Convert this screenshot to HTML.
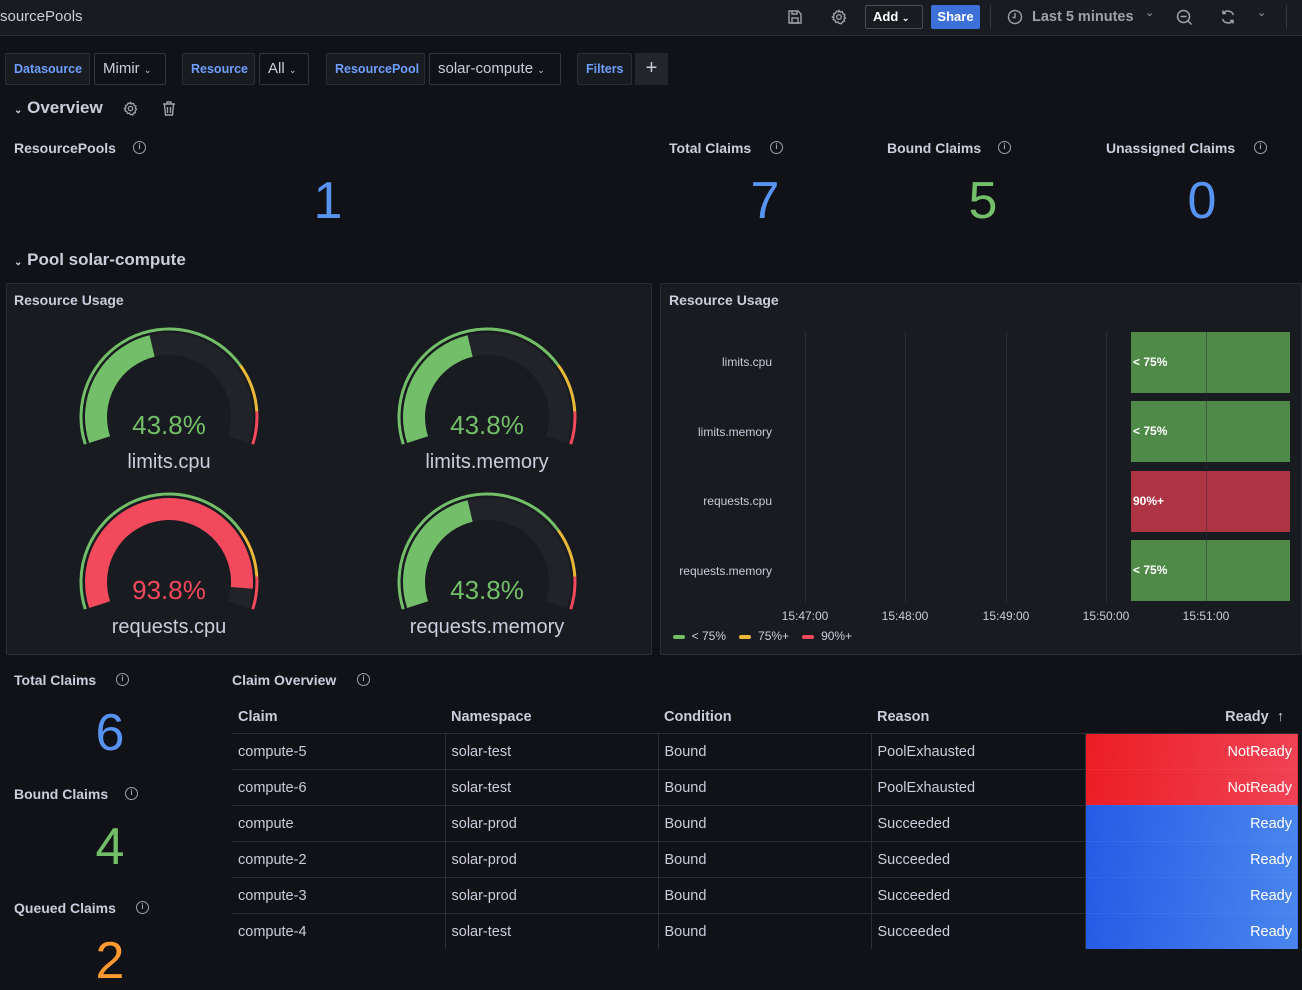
<!DOCTYPE html>
<html><head><meta charset="utf-8">
<style>
*{box-sizing:border-box;margin:0;padding:0}
body{width:1302px;height:981px;overflow:hidden;background:#111217;font-family:"Liberation Sans",sans-serif;color:#ccccdc;position:relative}
.a{position:absolute;white-space:nowrap}
.top{position:absolute;left:0;top:0;width:1302px;height:36px;background:#181b1f;border-bottom:1px solid #2c2e33}
.lbl{position:absolute;height:32px;border:1px solid #2c2e33;background:#181b1f;color:#6e9fff;font-size:12.5px;font-weight:bold;line-height:30px;padding:0 8px;border-radius:2px}
.sel{position:absolute;height:32px;border:1px solid #34363c;background:#111217;color:#ccccdc;font-size:15px;line-height:30px;padding:0 8px;border-radius:2px}
.t{font-size:14px;font-weight:bold;color:#ccccdc}
.big{font-size:52px;line-height:52px;color:#5794f2;text-align:center;width:100px}
.info{display:inline-block;width:13px;height:13px;border:1.4px solid #9fa1a8;border-radius:50%;position:absolute;font-size:8px;line-height:10px;text-align:center;color:#9fa1a8;font-weight:bold}
.panel{position:absolute;background:#181b1f;border:1px solid #2c2e33;border-radius:2px}
.gv{position:absolute;width:180px;text-align:center;font-size:26px;color:#73bf69}
.gl{position:absolute;width:200px;text-align:center;font-size:20px;color:#ccccdc}
.rl{position:absolute;right:529px;font-size:12px;color:#ccccdc;text-align:right}
.bar{position:absolute;left:470px;width:159px;height:61px;background:#508a48;color:#fff;font-size:12px;font-weight:bold;line-height:61px;padding-left:2px}
.gx{position:absolute;top:48px;width:1px;height:270px;background:#2c2e33}
.tl{position:absolute;top:324px;font-size:12px;color:#ccccdc;width:60px;text-align:center}
table{border-collapse:collapse;position:absolute;left:232px;top:702px;width:1066px;font-size:14.5px;color:#ccccdc}
th{height:31px;text-align:left;font-weight:bold;padding-left:6px;border-bottom:1px solid #2c2e33}
td{height:36px;padding-left:6px;padding-top:2px;border-bottom:1px solid #2c2e33;border-left:1px solid #2c2e33}
tr:last-child td{border-bottom:none}
td:first-child{border-left:none}
td.r{text-align:right;padding-right:6px;color:#fff;border-bottom:1px solid rgba(255,255,255,0.05)}
.nr{background:linear-gradient(100deg,#ec1d24,#f04355)}
.ok{background:linear-gradient(100deg,#245be6,#4a86ee)}
</style></head><body>
<div class="top"></div>
<div class="a" style="left:0;top:8px;font-size:15px;color:#ccccdc">sourcePools</div>
<svg class="a" style="left:787px;top:9px" width="16" height="16" viewBox="0 0 16 16" fill="none" stroke="#9fa1a8" stroke-width="1.4"><path d="M2 2h9l3 3v9H2z"/><rect x="5" y="9" width="6" height="5"/><path d="M5 2v3h5V2"/></svg>
<svg class="a" style="left:831px;top:9px" width="16" height="16" viewBox="0 0 16 16" fill="none" stroke="#9fa1a8" stroke-width="1.4"><circle cx="8" cy="8" r="2.3"/><path d="M8 1.5l1.3 1.6 2-.4.6 2 1.9.8-.6 2 1.3 1.5-1.6 1.3.4 2-2 .6-.8 1.9-2-.6L8 14.5l-1.3-1.6-2 .4-.6-2-1.9-.8.6-2L1.5 8l1.6-1.3-.4-2 2-.6.8-1.9 2 .6z"/></svg>
<div class="a" style="left:865px;top:5px;width:58px;height:24px;border:1px solid #4a4c52;border-radius:2px;color:#fff;font-size:13px;font-weight:bold;line-height:22px;padding-left:7px">Add <span style="font-size:9px">&#8964;</span></div>
<div class="a" style="left:931px;top:5px;width:49px;height:24px;background:#3d71d9;border-radius:2px;color:#fff;font-size:13px;font-weight:bold;line-height:24px;text-align:center">Share</div>
<div class="a" style="left:990px;top:5px;width:1px;height:24px;background:#34363c"></div>
<svg class="a" style="left:1007px;top:9px" width="16" height="16" viewBox="0 0 16 16" fill="none" stroke="#9fa1a8" stroke-width="1.4"><circle cx="8" cy="8" r="6.5"/><path d="M8 4v4.5H5.5"/></svg>
<div class="a" style="left:1032px;top:9px;font-size:14.5px;font-weight:bold;color:#9fa1a8">Last 5 minutes</div>
<div class="a" style="left:1145px;top:6px;font-size:11px;color:#9fa1a8">&#8964;</div>
<svg class="a" style="left:1176px;top:9px" width="17" height="17" viewBox="0 0 17 17" fill="none" stroke="#9fa1a8" stroke-width="1.5"><circle cx="7.5" cy="7.5" r="6"/><path d="M4.5 7.5h6M12 12l3.5 3.5"/></svg>
<svg class="a" style="left:1220px;top:9px" width="16" height="16" viewBox="0 0 16 16" fill="none" stroke="#9fa1a8" stroke-width="1.5"><path d="M13.5 6A6 6 0 0 0 3 4.5M2.5 10A6 6 0 0 0 13 11.5"/><path d="M3 1.5v3h3M13 14.5v-3h-3"/></svg>
<div class="a" style="left:1257px;top:6px;font-size:11px;color:#9fa1a8">&#8964;</div>
<div class="a" style="left:1286px;top:5px;width:1px;height:24px;background:#34363c"></div>

<div class="lbl" style="left:5px;top:53px;width:85px">Datasource</div>
<div class="sel" style="left:94px;top:53px;width:72px">Mimir <span style="font-size:9px">&#8964;</span></div>
<div class="lbl" style="left:182px;top:53px;width:73px">Resource</div>
<div class="sel" style="left:259px;top:53px;width:50px">All <span style="font-size:9px">&#8964;</span></div>
<div class="lbl" style="left:326px;top:53px;width:99px">ResourcePool</div>
<div class="sel" style="left:429px;top:53px;width:132px">solar-compute <span style="font-size:9px">&#8964;</span></div>
<div class="lbl" style="left:577px;top:53px;width:55px">Filters</div>
<div class="a" style="left:635px;top:53px;width:33px;height:32px;background:#22252b;color:#ccccdc;font-size:20px;text-align:center;line-height:30px">+</div>

<div class="a" style="left:14px;top:98px;font-size:17px;font-weight:bold;color:#ccccdc"><span style="font-size:10px">&#8964;</span> Overview</div>
<svg class="a" style="left:123px;top:101px" width="15" height="15" viewBox="0 0 16 16" fill="none" stroke="#9fa1a8" stroke-width="1.4"><circle cx="8" cy="8" r="2.3"/><path d="M8 1.5l1.3 1.6 2-.4.6 2 1.9.8-.6 2 1.3 1.5-1.6 1.3.4 2-2 .6-.8 1.9-2-.6L8 14.5l-1.3-1.6-2 .4-.6-2-1.9-.8.6-2L1.5 8l1.6-1.3-.4-2 2-.6.8-1.9 2 .6z"/></svg>
<svg class="a" style="left:162px;top:101px" width="14" height="15" viewBox="0 0 14 15" fill="none" stroke="#9fa1a8" stroke-width="1.4"><path d="M1 3h12M5 3V1h4v2M2.5 3l1 11h7l1-11M5.5 6v6M8.5 6v6"/></svg>

<div class="a t" style="left:14px;top:140px">ResourcePools</div><span class="info" style="left:133px;top:141px">i</span>
<div class="a big" style="left:278px;top:175px">1</div>
<div class="a t" style="left:669px;top:140px">Total Claims</div><span class="info" style="left:770px;top:141px">i</span>
<div class="a big" style="left:715px;top:175px">7</div>
<div class="a t" style="left:887px;top:140px">Bound Claims</div><span class="info" style="left:998px;top:141px">i</span>
<div class="a big" style="left:933px;top:175px;color:#73bf69">5</div>
<div class="a t" style="left:1106px;top:140px">Unassigned Claims</div><span class="info" style="left:1254px;top:141px">i</span>
<div class="a big" style="left:1152px;top:175px">0</div>

<div class="a" style="left:14px;top:250px;font-size:17px;font-weight:bold;color:#ccccdc"><span style="font-size:10px">&#8964;</span> Pool solar-compute</div>

<div class="panel" style="left:6px;top:283px;width:646px;height:372px"></div>
<div class="a t" style="left:14px;top:292px">Resource Usage</div>

<svg class="a" style="left:79px;top:327px" width="180" height="180"><path d="M20.6 112.6A73 73 0 1 1 159.4 112.6" stroke="#222328" stroke-width="22" fill="none"/><path d="M20.6 112.6A73 73 0 0 1 73.1 19" stroke="#73bf69" stroke-width="22" fill="none"/><path d="M6.3 117.2A88 88 0 0 1 161.2 38.3" stroke="#73bf69" stroke-width="3" fill="none"/><path d="M161.2 38.3A88 88 0 0 1 177.8 84.5" stroke="#eab839" stroke-width="3" fill="none"/><path d="M177.8 84.5A88 88 0 0 1 173.7 117.2" stroke="#f2495c" stroke-width="3" fill="none"/></svg>
<div class="gv" style="left:79px;top:410px">43.8%</div>
<div class="gl" style="left:69px;top:451px">limits.cpu</div>

<svg class="a" style="left:397px;top:327px" width="180" height="180"><path d="M20.6 112.6A73 73 0 1 1 159.4 112.6" stroke="#222328" stroke-width="22" fill="none"/><path d="M20.6 112.6A73 73 0 0 1 73.1 19" stroke="#73bf69" stroke-width="22" fill="none"/><path d="M6.3 117.2A88 88 0 0 1 161.2 38.3" stroke="#73bf69" stroke-width="3" fill="none"/><path d="M161.2 38.3A88 88 0 0 1 177.8 84.5" stroke="#eab839" stroke-width="3" fill="none"/><path d="M177.8 84.5A88 88 0 0 1 173.7 117.2" stroke="#f2495c" stroke-width="3" fill="none"/></svg>
<div class="gv" style="left:397px;top:410px">43.8%</div>
<div class="gl" style="left:387px;top:451px">limits.memory</div>

<svg class="a" style="left:79px;top:492px" width="180" height="180"><path d="M20.6 112.6A73 73 0 1 1 159.4 112.6" stroke="#222328" stroke-width="22" fill="none"/><path d="M20.6 112.6A73 73 0 1 1 162.8 95.9" stroke="#f2495c" stroke-width="22" fill="none"/><path d="M6.3 117.2A88 88 0 0 1 161.2 38.3" stroke="#73bf69" stroke-width="3" fill="none"/><path d="M161.2 38.3A88 88 0 0 1 177.8 84.5" stroke="#eab839" stroke-width="3" fill="none"/><path d="M177.8 84.5A88 88 0 0 1 173.7 117.2" stroke="#f2495c" stroke-width="3" fill="none"/></svg>
<div class="gv" style="left:79px;top:575px;color:#f2495c">93.8%</div>
<div class="gl" style="left:69px;top:616px">requests.cpu</div>

<svg class="a" style="left:397px;top:492px" width="180" height="180"><path d="M20.6 112.6A73 73 0 1 1 159.4 112.6" stroke="#222328" stroke-width="22" fill="none"/><path d="M20.6 112.6A73 73 0 0 1 73.1 19" stroke="#73bf69" stroke-width="22" fill="none"/><path d="M6.3 117.2A88 88 0 0 1 161.2 38.3" stroke="#73bf69" stroke-width="3" fill="none"/><path d="M161.2 38.3A88 88 0 0 1 177.8 84.5" stroke="#eab839" stroke-width="3" fill="none"/><path d="M177.8 84.5A88 88 0 0 1 173.7 117.2" stroke="#f2495c" stroke-width="3" fill="none"/></svg>
<div class="gv" style="left:397px;top:575px">43.8%</div>
<div class="gl" style="left:387px;top:616px">requests.memory</div>

<div class="panel" style="left:660px;top:283px;width:642px;height:372px">
  <div class="a t" style="left:8px;top:8px">Resource Usage</div>
  <div class="gx" style="left:144px"></div><div class="gx" style="left:244px"></div><div class="gx" style="left:345px"></div><div class="gx" style="left:445px"></div>
  <div class="rl" style="top:71px">limits.cpu</div>
  <div class="rl" style="top:141px">limits.memory</div>
  <div class="rl" style="top:210px">requests.cpu</div>
  <div class="rl" style="top:280px">requests.memory</div>
  <div class="bar" style="top:48px">&lt; 75%</div>
  <div class="bar" style="top:117px">&lt; 75%</div>
  <div class="bar" style="top:187px;background:#ad3443">90%+</div>
  <div class="bar" style="top:256px">&lt; 75%</div>
  <div class="gx" style="left:545px;opacity:.5"></div>
  <div class="tl" style="left:114px;top:325px">15:47:00</div><div class="tl" style="left:214px;top:325px">15:48:00</div><div class="tl" style="left:315px;top:325px">15:49:00</div><div class="tl" style="left:415px;top:325px">15:50:00</div><div class="tl" style="left:515px;top:325px">15:51:00</div>
  <div class="a" style="left:12px;top:345px;font-size:12px;color:#ccccdc"><span style="display:inline-block;width:12px;height:4px;background:#73bf69;border-radius:2px;vertical-align:middle"></span>&nbsp; &lt; 75%&nbsp;&nbsp;&nbsp;&nbsp;<span style="display:inline-block;width:12px;height:4px;background:#eab839;border-radius:2px;vertical-align:middle"></span>&nbsp; 75%+&nbsp;&nbsp;&nbsp;&nbsp;<span style="display:inline-block;width:12px;height:4px;background:#f2495c;border-radius:2px;vertical-align:middle"></span>&nbsp; 90%+</div>
</div>

<div class="a t" style="left:14px;top:672px">Total Claims</div><span class="info" style="left:116px;top:673px">i</span>
<div class="a big" style="left:60px;top:707px">6</div>
<div class="a t" style="left:14px;top:786px">Bound Claims</div><span class="info" style="left:125px;top:787px">i</span>
<div class="a big" style="left:60px;top:821px;color:#73bf69">4</div>
<div class="a t" style="left:14px;top:900px">Queued Claims</div><span class="info" style="left:136px;top:901px">i</span>
<div class="a big" style="left:60px;top:935px;color:#ff9830">2</div>

<div class="a t" style="left:232px;top:672px">Claim Overview</div><span class="info" style="left:357px;top:673px">i</span>
<table>
<tr><th style="width:213px">Claim</th><th style="width:213px">Namespace</th><th style="width:213px">Condition</th><th style="width:214px">Reason</th><th style="text-align:right;padding-right:14px">Ready &nbsp;&#8593;</th></tr>
<tr><td>compute-5</td><td>solar-test</td><td>Bound</td><td>PoolExhausted</td><td class="r nr">NotReady</td></tr>
<tr><td>compute-6</td><td>solar-test</td><td>Bound</td><td>PoolExhausted</td><td class="r nr">NotReady</td></tr>
<tr><td>compute</td><td>solar-prod</td><td>Bound</td><td>Succeeded</td><td class="r ok">Ready</td></tr>
<tr><td>compute-2</td><td>solar-prod</td><td>Bound</td><td>Succeeded</td><td class="r ok">Ready</td></tr>
<tr><td>compute-3</td><td>solar-prod</td><td>Bound</td><td>Succeeded</td><td class="r ok">Ready</td></tr>
<tr><td>compute-4</td><td>solar-test</td><td>Bound</td><td>Succeeded</td><td class="r ok">Ready</td></tr>
</table>
</body></html>
